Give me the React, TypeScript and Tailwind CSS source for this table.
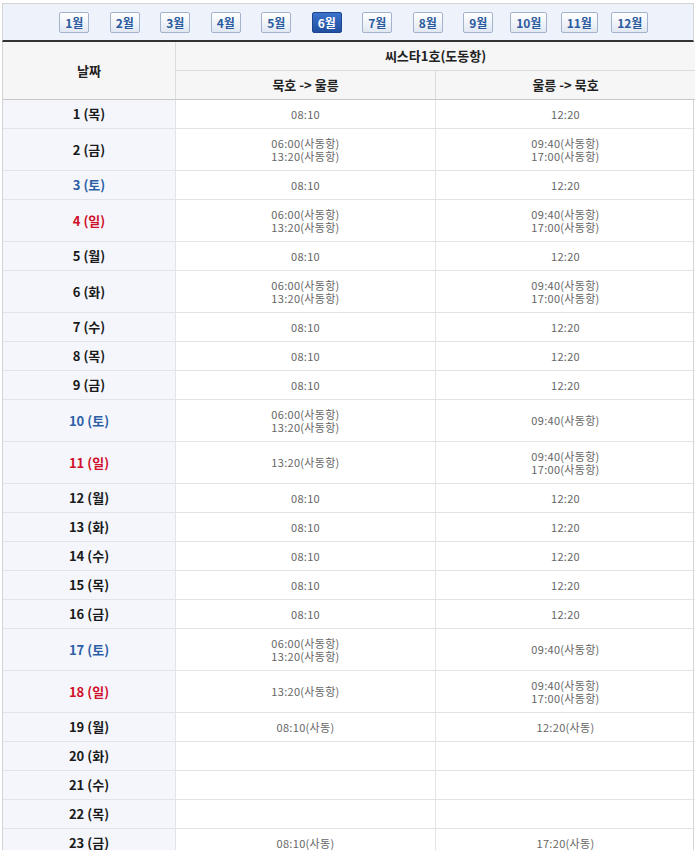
type Day = { d: number; w: string; a: string[]; b: string[] };

const S = "08:10";
const R = "12:20";
const DA = ["06:00(사동항)", "13:20(사동항)"];
const DB = ["09:40(사동항)", "17:00(사동항)"];

const days: Day[] = [
  { d: 1, w: "목", a: [S], b: [R] },
  { d: 2, w: "금", a: DA, b: DB },
  { d: 3, w: "토", a: [S], b: [R] },
  { d: 4, w: "일", a: DA, b: DB },
  { d: 5, w: "월", a: [S], b: [R] },
  { d: 6, w: "화", a: DA, b: DB },
  { d: 7, w: "수", a: [S], b: [R] },
  { d: 8, w: "목", a: [S], b: [R] },
  { d: 9, w: "금", a: [S], b: [R] },
  { d: 10, w: "토", a: DA, b: ["09:40(사동항)"] },
  { d: 11, w: "일", a: ["13:20(사동항)"], b: DB },
  { d: 12, w: "월", a: [S], b: [R] },
  { d: 13, w: "화", a: [S], b: [R] },
  { d: 14, w: "수", a: [S], b: [R] },
  { d: 15, w: "목", a: [S], b: [R] },
  { d: 16, w: "금", a: [S], b: [R] },
  { d: 17, w: "토", a: DA, b: ["09:40(사동항)"] },
  { d: 18, w: "일", a: ["13:20(사동항)"], b: DB },
  { d: 19, w: "월", a: ["08:10(사동)"], b: ["12:20(사동)"] },
  { d: 20, w: "화", a: [], b: [] },
  { d: 21, w: "수", a: [], b: [] },
  { d: 22, w: "목", a: [], b: [] },
  { d: 23, w: "금", a: ["08:10(사동)"], b: ["17:20(사동)"] },
];

const months = [1, 2, 3, 4, 5, 6, 7, 8, 9, 10, 11, 12];

const Times = ({ list }: { list: string[] }) => (
  <div className="flex flex-col items-center justify-center text-[11px] leading-[13px] tracking-[0.3px] text-[#666]">
    {list.map((t, i) => (
      <span key={i}>{t}</span>
    ))}
  </div>
);

const App = () => {
  return (
    <div
      className="min-h-screen bg-white pt-[3px]"
      style={{ fontFamily: '"Noto Sans CJK KR", "Noto Sans", sans-serif' }}
    >
      <div className="ml-[2px] w-[692px]">
        <div className="flex h-[39px] items-center border-x border-t border-[#d4d4d4] border-b-2 border-b-[#333] bg-[#eef3fb] pl-[46px]">
          {months.map((m) => (
            <div key={m} className="flex w-[50.5px] justify-center">
              <button
                className={
                  m === 6
                    ? "h-[21px] rounded-[2px] border border-[#1c468f] bg-gradient-to-b from-[#3b72cc] to-[#1f4f9f] px-[5px] text-[12px] font-bold leading-[19px] text-white"
                    : "h-[21px] rounded-[2px] border border-[#a3b3cb] bg-gradient-to-b from-white to-[#e2e8f2] px-[5px] text-[12px] font-bold leading-[19px] text-[#2a5a9e]"
                }
              >
                {m}월
              </button>
            </div>
          ))}
        </div>

        <div className="grid grid-cols-[173px_260px_259px] border-x border-[#d4d4d4]">
          <div className="row-span-2 flex items-center justify-center border-r border-b border-r-[#dcdcdc] border-b-[#c8c8c8] bg-[#f6f6f6] text-[13px] font-bold text-[#222]">
            날짜
          </div>
          <div className="col-span-2 flex h-[29px] items-center justify-center border-b border-[#dcdcdc] bg-[#f6f6f6] text-[13px] font-bold text-[#222]">
            씨스타1호(도동항)
          </div>
          <div className="flex h-[29px] items-center justify-center border-r border-b border-r-[#dcdcdc] border-b-[#c8c8c8] bg-[#f6f6f6] text-[13px] font-bold text-[#222]">
            묵호 -&gt; 울릉
          </div>
          <div className="flex h-[29px] items-center justify-center border-b border-b-[#c8c8c8] bg-[#f6f6f6] text-[13px] font-bold text-[#222]">
            울릉 -&gt; 묵호
          </div>

          {days.map((row) => {
            const tall = row.a.length > 1 || row.b.length > 1;
            const h = tall ? "h-[42px]" : "h-[29px]";
            const color =
              row.w === "토" ? "text-[#2d5fa6]" : row.w === "일" ? "text-[#d0102a]" : "text-[#1a1a1a]";
            return (
              <div key={row.d} className="contents">
                <div
                  className={`${h} flex items-center justify-center border-r border-b border-[#e0e3ea] bg-[#f4f6fc] text-[13px] font-bold ${color}`}
                >
                  {row.d} ({row.w})
                </div>
                <div className={`${h} flex items-center justify-center border-r border-b border-[#e3e3e3]`}>
                  <Times list={row.a} />
                </div>
                <div className={`${h} flex items-center justify-center border-b border-[#e3e3e3]`}>
                  <Times list={row.b} />
                </div>
              </div>
            );
          })}
        </div>
      </div>
    </div>
  );
};

export default App;
